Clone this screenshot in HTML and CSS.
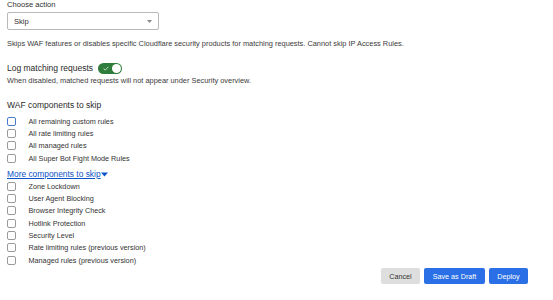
FILE: index.html
```html
<!DOCTYPE html>
<html>
<head>
<meta charset="utf-8">
<link rel="stylesheet" href="styles.css">
</head>
<body>
<div class="page">
  <div class="label">Choose action</div>
  <div class="select">
    <span>Skip</span>
    <svg class="caret" width="5" height="3" viewBox="0 0 5 3"><path d="M0 0H5L2.5 3Z" fill="#8a8a8a"/></svg>
  </div>
  <p class="help help-top">Skips WAF features or disables specific Cloudflare security products for matching requests. Cannot skip IP Access Rules.</p>

  <div class="toggle-row">
    <span class="heading">Log matching requests</span>
    <span class="toggle">
      <svg class="check" width="6" height="5" viewBox="0 0 6 5"><path d="M0.6 2.6L2.3 4.1L5.4 0.8" fill="none" stroke="#cfe8d3" stroke-width="0.9"/></svg>
      <span class="knob"></span>
    </span>
  </div>
  <p class="help help-log">When disabled, matched requests will not appear under Security overview.</p>

  <div class="heading section">WAF components to skip</div>
  <ul class="checks">
    <li><span class="box focus"></span>All remaining custom rules</li>
    <li><span class="box"></span>All rate limiting rules</li>
    <li><span class="box"></span>All managed rules</li>
    <li><span class="box"></span>All Super Bot Fight Mode Rules</li>
  </ul>
  <a class="more" href="#">More components to skip<svg width="7" height="5" viewBox="0 0 7 5"><path d="M0 0.5H7L3.5 4.5Z" fill="#0b53c8"/></svg></a>
  <ul class="checks checks-more">
    <li><span class="box"></span>Zone Lockdown</li>
    <li><span class="box"></span>User Agent Blocking</li>
    <li><span class="box"></span>Browser Integrity Check</li>
    <li><span class="box"></span>Hotlink Protection</li>
    <li><span class="box"></span>Security Level</li>
    <li><span class="box"></span>Rate limiting rules (previous version)</li>
    <li><span class="box"></span>Managed rules (previous version)</li>
  </ul>
  <div class="actions">
    <button class="btn btn-cancel">Cancel</button>
    <button class="btn btn-primary btn-draft">Save as Draft</button>
    <button class="btn btn-primary btn-deploy">Deploy</button>
  </div>
</div>
</body>
</html>
```

FILE: styles.css
```css
html, body {
  margin: 0;
  padding: 0;
  background: #ffffff;
}
body {
  font-family: "Liberation Sans", Arial, sans-serif;
  color: #313131;
  font-size: 7px;
}
.page {
  width: 553px;
  height: 300px;
  padding: 0 7px;
  box-sizing: border-box;
  display: flex;
  flex-direction: column;
  align-items: flex-start;
}
.label {
  font-size: 7.6px;
  line-height: 9px;
  margin-top: 0;
}
.select {
  margin-top: 3px;
  width: 152px;
  height: 18px;
  box-sizing: border-box;
  border: 1px solid #b8b8b8;
  border-radius: 2px;
  display: flex;
  align-items: center;
  justify-content: space-between;
  padding: 0 6px 0 6px;
  font-size: 7.6px;
}
.caret { display: block; }
.help {
  margin: 0;
  font-size: 7.4px;
  line-height: 9px;
  color: #3a3a3a;
}
.help-top { margin-top: 9px; }
.toggle-row {
  margin-top: 15px;
  display: flex;
  align-items: center;
  gap: 5px;
}
.heading {
  font-size: 8.5px;
  line-height: 11px;
  color: #2a2a2a;
}
.toggle {
  position: relative;
  width: 24px;
  height: 11px;
  border-radius: 6px;
  background: #2e7d3c;
  display: flex;
  align-items: center;
  padding-left: 5px;
  box-sizing: border-box;
}
.check { display: block; }
.knob {
  position: absolute;
  right: 1px;
  top: 1px;
  width: 9px;
  height: 9px;
  border-radius: 50%;
  background: #ffffff;
}
.help-log { margin-top: 2px; }
.section { margin-top: 15px; }
.checks {
  list-style: none;
  margin: 4px 0 0 0;
  padding: 0;
}
.checks li {
  display: flex;
  align-items: center;
  height: 12.3px;
  font-size: 7.25px;
  color: #333;
}
.box {
  width: 7px;
  height: 7px;
  border: 1px solid #9a9a9a;
  border-radius: 2px;
  margin-right: 12.5px;
  flex: none;
}
.box.focus {
  border-color: #4a7bd0;
}
.more {
  margin-top: 5px;
  font-size: 8.4px;
  line-height: 10px;
  color: #0b53c8;
  text-decoration: underline;
  text-underline-offset: 1px;
  display: flex;
  align-items: center;
}
.checks-more { margin-top: 1px; }
.actions {
  margin-top: 2px;
  align-self: stretch;
  display: flex;
  justify-content: flex-end;
  gap: 4px;
  padding-right: 18px;
}
.btn {
  font-family: "Liberation Sans", Arial, sans-serif;
  font-size: 7.2px;
  height: 16px;
  border: none;
  border-radius: 2px;
  padding: 0;
  cursor: pointer;
}
.btn-cancel {
  background: #dedede;
  color: #333;
  width: 39px;
}
.btn-primary {
  background: #2a6fe6;
  color: #ffffff;
}
.btn-draft { width: 61px; }
.btn-deploy { width: 39px; }
```
